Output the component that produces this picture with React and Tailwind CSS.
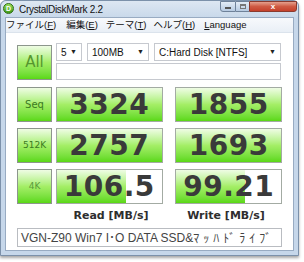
const green = "bg-gradient-to-b from-[#effce4] via-[#a4ee66] to-[#5ad812]";

function Tag({ children, className = "" }) {
  return (
    <div className={`w-[35px] h-[35px] shrink-0 border border-[#8c968c] ${green} flex items-center justify-center font-['DejaVu_Sans',sans-serif] ${className}`}>
      {children}
    </div>
  );
}

function Value({ children, fill = 100 }) {
  return (
    <div className="relative w-[110px] h-[35px] border border-[#a3aba3] bg-white overflow-hidden">
      <div className={`absolute inset-y-0 left-0 ${green}`} style={{ width: `${fill}%` }} />
      <div className="relative h-full flex items-center justify-center font-['DejaVu_Sans',sans-serif] font-bold text-[28px] leading-none text-[#3a3a3a] tracking-[0.5px]">
        {children}
      </div>
    </div>
  );
}

function Row({ tag, read, write, readFill, writeFill }) {
  return (
    <div className="flex gap-[4px] items-center">
      {tag}
      <Value fill={readFill}>{read}</Value>
      <div className="w-[5px]" />
      <Value fill={writeFill}>{write}</Value>
    </div>
  );
}

function Select({ w, children }) {
  return (
    <div className={`${w} h-[18px] border border-[#c6c9cf] bg-white flex items-center justify-between pl-[4px] pr-[4px] text-[10px] text-[#111]`}>
      <span>{children}</span>
      <span className="text-[7px] text-[#222]">▼</span>
    </div>
  );
}

export default function App() {
  return (
    <div className="w-[304px] h-[262px] bg-white overflow-hidden font-['Liberation_Sans','Noto_Sans_CJK_JP',sans-serif]">
      <div className="w-[299px] h-[256px] bg-[#c6d7ea] border border-[#7c91aa] rounded-t-[6px] flex flex-col shadow-[0_2px_3px_rgba(0,0,0,0.35)]">
        <div className="h-[16px] flex items-start bg-gradient-to-b from-[#dde7f2] to-[#c9d9ea] rounded-t-[6px]">
          <div className="mt-[2px] ml-[2px] w-[11px] h-[11px] rounded-full bg-gradient-to-b from-[#9be05a] to-[#3c9a14] border border-[#2f6d12] flex items-center justify-center text-[7px] font-bold text-white leading-none">D</div>
          <div className="ml-[5px] mt-[1px] text-[10px] tracking-[-0.3px] text-[#111]">CrystalDiskMark 2.2</div>
          <div className="ml-auto mr-[1px] flex h-[11px]">
            <div className="w-[16px] h-full border border-[#6f829a] rounded-bl-[3px] bg-gradient-to-b from-[#e3ecf6] to-[#b7cbe2] flex items-end justify-center pb-[2px]">
              <div className="w-[6px] h-[2px] bg-white border border-[#555]" />
            </div>
            <div className="w-[13px] h-full border-y border-[#6f829a] bg-gradient-to-b from-[#e3ecf6] to-[#b7cbe2] flex items-center justify-center">
              <div className="w-[6px] h-[5px] border border-[#777] border-t-2" />
            </div>
            <div className="w-[48px] h-full border border-[#8a3a2e] rounded-br-[3px] bg-gradient-to-b from-[#e4a08e] via-[#cf5a43] to-[#c4402a] flex items-center justify-center text-[8px] font-bold text-white leading-none">x</div>
          </div>
        </div>
        <div className="mx-[4px] mb-[4px] flex-1 flex flex-col border border-[#98abc2] bg-white">
          <div className="h-[15px] flex items-center text-[9.5px] text-[#111] bg-gradient-to-b from-[#f7f9fc] to-[#e9eff6] border-b border-[#dbe3ec]">
            <span>ファイル(<u>F</u>)</span>
            <span className="ml-[10px]">編集(<u>E</u>)</span>
            <span className="ml-[8px]">テーマ(<u>T</u>)</span>
            <span className="ml-[7px]">ヘルプ(<u>H</u>)</span>
            <span className="ml-[9px]"><u>L</u>anguage</span>
          </div>
          <div className="flex flex-col px-[11px] pt-[10px]">
            <div className="flex gap-[4px] h-[37px]">
              <Tag className="mt-[2px] text-[15px] text-[#55962f]">All</Tag>
              <div className="flex flex-col gap-[2px]">
                <div className="flex gap-[5px]">
                  <Select w="w-[26px]">5</Select>
                  <Select w="w-[62px]">100MB</Select>
                  <Select w="w-[127px]">C:Hard Disk [NTFS]</Select>
                </div>
                <div className="w-[225px] h-[17px] border border-[#c6c9cf] bg-white" />
              </div>
            </div>
            <div className="mt-[7px] flex flex-col gap-[6px]">
              <Row tag={<Tag className="text-[10px] text-[#3b7a22]">Seq</Tag>} read="3324" write="1855" />
              <Row tag={<Tag className="text-[9px] text-[#3b7a22]">512K</Tag>} read="2757" write="1693" />
              <Row tag={<Tag className="text-[9px] text-[#5a9a3c]">4K</Tag>} read="106.5" write="99.21" readFill={66} writeFill={66} />
            </div>
            <div className="h-[24px] flex items-center font-['DejaVu_Sans',sans-serif] font-bold text-[11px] text-[#2e2e2e]">
              <div className="w-[39px]" />
              <div className="w-[110px] text-center">Read [MB/s]</div>
              <div className="w-[5px]" />
              <div className="w-[110px] text-center">Write [MB/s]</div>
            </div>
            <div className="h-[19px] border border-[#b9bcc1] bg-white flex items-center pl-[3px] text-[12px] text-[#444] whitespace-nowrap overflow-hidden">
              VGN-Z90 Win7 I･O DATA SSD&amp;<span className="tracking-[4px] font-['Noto_Sans_CJK_JP',sans-serif]">ﾏｯﾊﾄﾞﾗｲﾌﾞ</span>
            </div>
          </div>
        </div>
      </div>
    </div>
  );
}
